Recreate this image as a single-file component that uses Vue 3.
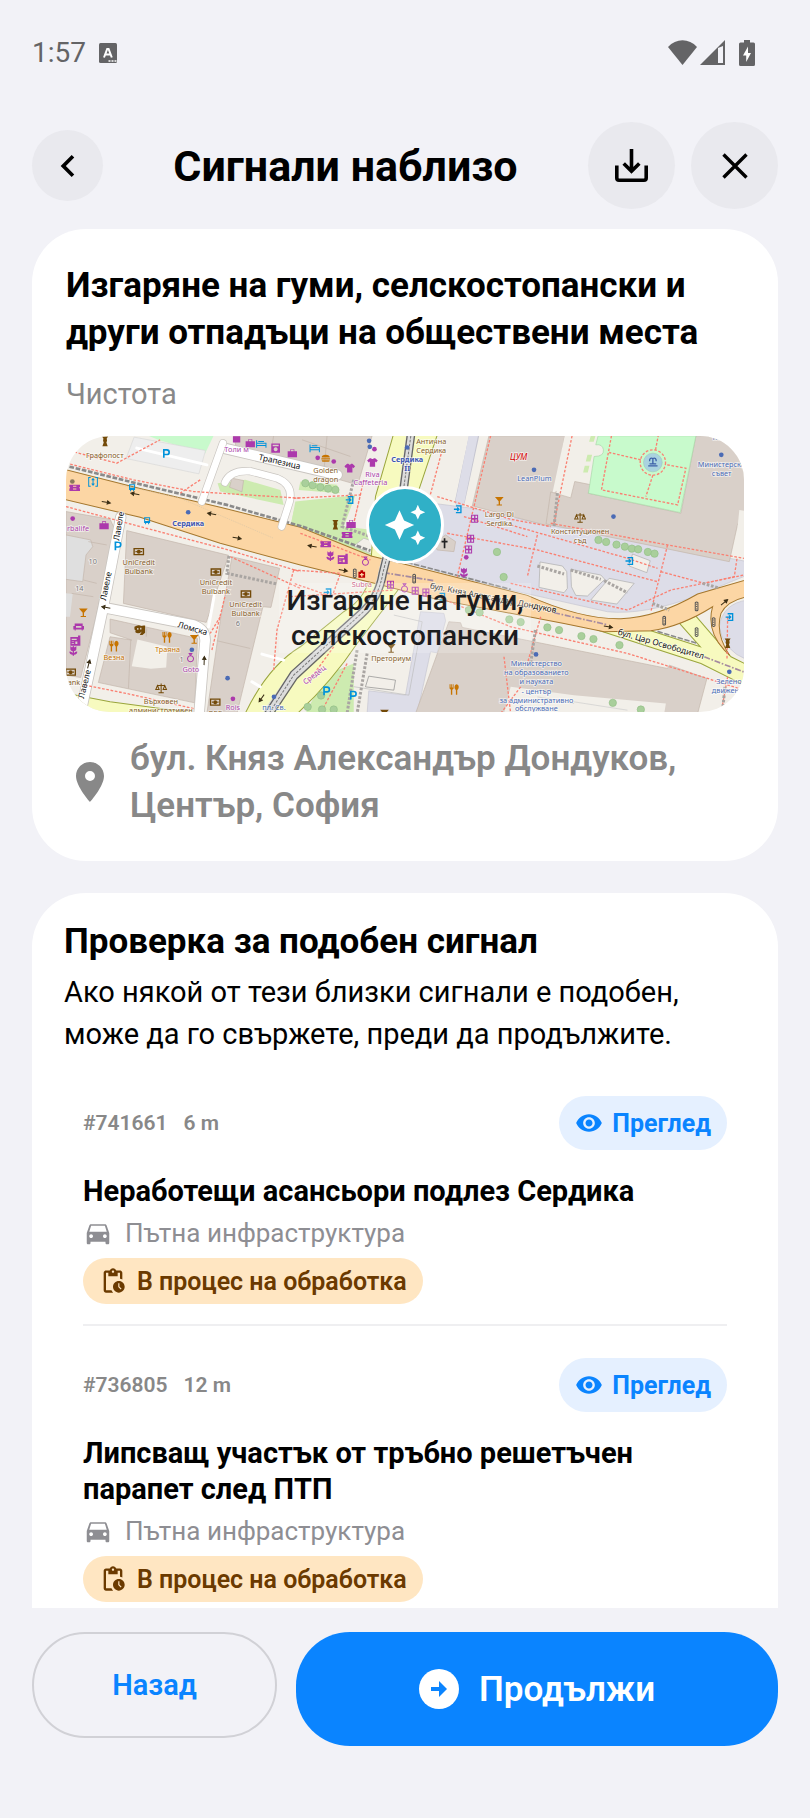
<template>
  <div class="screen">
    <div class="status-bar">
      <span class="clock">1:57</span>
      <svg class="status-lang" viewBox="0 0 18 20" aria-hidden="true">
        <rect width="18" height="20" rx="1.5" fill="#646466" />
        <path d="M5 14.5 8.2 6h1.4l3.2 8.5M6.4 11.6h5" fill="none" stroke="#fff" stroke-width="2" />
        <path d="M9.5 18h2M12.5 18h2M15.5 18h2" stroke="#fff" stroke-width="1.6" />
      </svg>
      <div class="status-icons">
        <svg width="29" height="25" viewBox="0 0 29 25" aria-hidden="true">
          <path d="M0 7C8-2 21-2 29 7L14.5 25z" fill="#646466" />
        </svg>
        <svg width="25" height="25" viewBox="0 0 25 25" aria-hidden="true">
          <path d="M25 0v25H0zM18 8v15h5V6z" fill="#646466" fill-rule="evenodd" />
        </svg>
        <svg class="battery" width="16" height="26" viewBox="0 0 16 26" aria-hidden="true">
          <path d="M5 0h6v2.5h3.5A1.5 1.5 0 0 1 16 4v20.5a1.5 1.5 0 0 1-1.5 1.5h-13A1.5 1.5 0 0 1 0 24.5V4a1.5 1.5 0 0 1 1.5-1.5H5z" fill="#646466" />
          <path d="M9 6.5 4 15.5h3.2v6.5L12 13H9z" fill="#fff" />
        </svg>
      </div>
    </div>

    <header class="header">
      <button class="round-btn small" type="button" aria-label="Назад">
        <svg width="44" height="44" viewBox="0 0 24 24"><path d="M15.41 7.41 14 6l-6 6 6 6 1.41-1.41L10.83 12z" /></svg>
      </button>
      <h1>Сигнали наблизо</h1>
      <button class="round-btn" type="button" aria-label="Изтегляне">
        <svg width="33" height="33" viewBox="0 0 33 33" fill="none" stroke="#000" stroke-width="3.6">
          <path d="M1.8 16.5V29a2.2 2.2 0 0 0 2.2 2.2h25a2.2 2.2 0 0 0 2.2-2.2V16.5M16.5 0v22M8.7 14.5l7.8 7.8 7.8-7.8" />
        </svg>
      </button>
      <button class="round-btn" type="button" aria-label="Затвори">
        <svg width="26" height="26" viewBox="0 0 26 26" fill="none" stroke="#000" stroke-width="3.4">
          <path d="M1.5 1.5l23 23M24.5 1.5l-23 23" />
        </svg>
      </button>
    </header>

    <main class="content">
      <section class="card report">
        <h2>Изгаряне на гуми, селскостопански и други отпадъци на обществени места</h2>
        <p class="report-category">Чистота</p>

        <div class="map">
          <svg class="map-canvas" viewBox="18 18 2031 828" preserveAspectRatio="xMidYMid slice" aria-hidden="true">
            <rect x="0" y="0" width="2100" height="900" fill="#f2efe9" />
            <path v-for="(a, i) in areas" :key="'a' + i" :d="a.d" :fill="a.fill" :stroke="a.stroke || 'none'" stroke-width="2" />

            <!-- yellow streets -->
            <g fill="#f7fabf" stroke="#9aa53c" stroke-width="3">
              <path d="M1000 10 945 200 930 420 Q925 500 850 545 L720 650 Q620 710 550 860 L700 860 Q810 760 890 640 Q990 510 1020 470 L1040 380 1075 180 1132 10z" />
              <path d="M10 788 150 815 430 852 430 880 10 880z" />
              <path d="M1610 600 1770 602 1918 650 1856 580 1905 558 2010 680 2060 705 2060 770 1920 700z" />
            </g>
            <!-- orange boulevard -->
            <path d="M10 118 240 176 480 232 720 292 932 378 1030 402 1400 496 Q1560 568 1680 566 Q1790 562 1910 492 L2060 448 2060 500 Q2000 510 1980 550 Q1962 610 2006 676 L1990 660 Q1935 600 1955 530 Q1860 590 1770 602 L1630 605 1510 580 1130 508 950 462 720 405 480 340 240 262 10 208z" fill="#fcd6a4" stroke="#a5772d" stroke-width="3" />
            <path d="M180 165 360 205 640 325" fill="none" stroke="#d9c6a6" stroke-width="2" stroke-dasharray="4 3" />
            <path d="M10 106 260 168 500 225 720 288 930 362" fill="none" stroke="#8a8a8a" stroke-width="8" stroke-dasharray="14 5" />
            <path d="M1020 392 1350 478M1790 604 1910 640" fill="none" stroke="#8a8a8a" stroke-width="5" stroke-dasharray="16 5" />
            <path d="M970 428 1120 452M1480 548l160 36M1930 680l120 46" fill="none" stroke="#a58aa0" stroke-width="5" stroke-dasharray="18 5 5 5" />

            <!-- tram tracks -->
            <g fill="none">
              <path d="M1050 18 1028 180 966 430 Q955 500 900 550 L700 735 620 850" stroke="#dcdcdc" stroke-width="26" />
              <path d="M1040 18 1018 180 956 430 Q945 500 892 545 L692 725 612 850M1062 18 1040 180 978 430 Q965 510 910 560 L710 745 640 850" stroke="#666" stroke-width="4" />
              <path d="M1051 18 1029 180 967 430 Q955 505 900 553 L700 735 626 850" stroke="#777" stroke-width="3" stroke-dasharray="8 4" />
            </g>

            <!-- local streets -->
            <g fill="none" stroke-linejoin="round" stroke-linecap="round">
              <g stroke="#c9c5c0" stroke-width="34">
                <path d="M182 262 130 530 66 830M130 532 400 585 Q440 600 434 640 L415 870" />
                <path d="M490 55 830 135" />
              </g>
              <g stroke="#fff" stroke-width="29">
                <path d="M182 262 130 530 66 830M130 532 400 585 Q440 600 434 640 L415 870" />
                <path d="M490 55 830 135" />
              </g>
              <path d="M488 40 425 215M494 158 Q510 120 570 124 L650 145 Q700 165 688 215 L664 290" stroke="#c9c5c0" stroke-width="24" />
              <path d="M488 40 425 215M494 158 Q510 120 570 124 L650 145 Q700 165 688 215 L664 290" stroke="#fff" stroke-width="20" />
              <path d="M230 55 440 105M465 480 445 590M605 672 670 690M575 755 600 770" stroke="#fff" stroke-width="9" />
              <path d="M1240 20 1198 215" stroke="#c5c5d0" stroke-width="30" />
              <path d="M1240 10 1198 215" stroke="#dddde8" stroke-width="27" />
            </g>

            <!-- footways -->
            <path v-for="(d, i) in footways" :key="'f' + i" :d="d" fill="none" stroke="#fa8072" stroke-width="4" stroke-dasharray="8 5" />
            <path d="M506 378 500 430 650 462M1490 190 1480 290M880 150 845 290 960 330M1430 408l80 24M1530 420l90 28M1630 452l70 36M1775 520l50 20M1925 460l50 14M890 660 860 850M920 670 890 850M1424 600 1410 700M1992 770l-8 80" fill="none" stroke="#a9a5a2" stroke-width="9" stroke-dasharray="8 5" />

            <circle v-for="(t, i) in trees" :key="'t' + i" :cx="t[0]" :cy="t[1]" r="11" fill="#a9cf9b" stroke="#93bf86" stroke-width="2" />
            <circle cx="1776" cy="98" r="28" fill="#aad3df" stroke="#9fc9c0" stroke-width="2" />
            <circle cx="1776" cy="98" r="38" fill="none" stroke="#fa8072" stroke-width="4" stroke-dasharray="8 5" />
            <path d="M1762 108h28M1766 102h20M1776 100V86M1766 94q0-12 10-8 10-4 10 8" fill="none" stroke="#3b5fa8" stroke-width="4" />

            <!-- points of interest -->
            <circle v-for="(p, i) in dots" :key="'d' + i" :cx="p[0]" :cy="p[1]" r="7" :fill="p[2]" />
            <g v-for="(p, i) in pois" :key="'p' + i" :transform="`translate(${p.x} ${p.y})`">
              <path :d="glyphs[p.icon].d" :fill="glyphs[p.icon].line ? 'none' : p.color" :stroke="p.color" :stroke-width="glyphs[p.icon].line || 0" fill-rule="evenodd" />
            </g>
            <g v-for="(a, i) in arrows" :key="'r' + i" :transform="`translate(${a[0]} ${a[1]}) rotate(${a[2]})`">
              <path d="M-13 0H6M4-5 13 0 4 5z" fill="#3a2d14" stroke="#3a2d14" stroke-width="3" />
            </g>

            <text
              v-for="(l, i) in labels"
              :key="'l' + i"
              class="map-label"
              :class="l.kind"
              :transform="`translate(${l.x} ${l.y}) rotate(${l.r || 0})`"
              text-anchor="middle"
            >{{ l.text }}</text>
          </svg>

          <div class="marker">
            <span class="marker-dot">
              <svg width="44" height="44" viewBox="0 0 24 24" fill="#fff">
                <path d="M19 9l1.25-2.75L23 5l-2.75-1.25L19 1l-1.25 2.75L15 5l2.75 1.25L19 9zm-7.5.5L9 4 6.5 9.5 1 12l5.5 2.5L9 20l2.5-5.5L17 12l-5.5-2.5zM19 15l-1.25 2.75L15 19l2.75 1.25L19 23l1.25-2.75L23 19l-2.75-1.25L19 15z" />
              </svg>
            </span>
            <span class="marker-label">Изгаряне на гуми, селскостопански</span>
          </div>
        </div>

        <div class="address">
          <svg width="48" height="48" viewBox="0 0 24 24" fill="#888" aria-hidden="true">
            <path d="M12 2C8.13 2 5 5.13 5 9c0 5.25 7 13 7 13s7-7.75 7-13c0-3.87-3.13-7-7-7zm0 9.5a2.5 2.5 0 0 1 0-5 2.5 2.5 0 0 1 0 5z" />
          </svg>
          <p>бул. Княз Александър Дондуков, Център, София</p>
        </div>
      </section>

      <section class="card similar">
        <h2>Проверка за подобен сигнал</h2>
        <p class="hint">Ако някой от тези близки сигнали е подобен, може да го свържете, преди да продължите.</p>

        <ul class="list">
          <li v-for="s in signals" :key="s.id" class="item">
            <div class="item-top">
              <span class="meta"><span>#{{ s.id }}</span><span>{{ s.distance }}</span></span>
              <button class="view-btn" type="button">
                <svg width="28" height="28" viewBox="0 0 24 24" fill="#0a84ff" aria-hidden="true">
                  <path d="M12 4.5C7 4.5 2.73 7.61 1 12c1.73 4.39 6 7.5 11 7.5s9.27-3.11 11-7.5c-1.73-4.39-6-7.5-11-7.5zM12 17c-2.76 0-5-2.24-5-5s2.24-5 5-5 5 2.24 5 5-2.24 5-5 5zm0-8c-1.66 0-3 1.34-3 3s1.34 3 3 3 3-1.34 3-3-1.34-3-3-3z" />
                </svg>
                Преглед
              </button>
            </div>
            <h3>{{ s.title }}</h3>
            <p class="category">
              <svg width="30" height="30" viewBox="0 0 24 24" fill="#8e8e93" aria-hidden="true">
                <path d="M18.92 6.01C18.72 5.42 18.16 5 17.5 5h-11c-.66 0-1.21.42-1.42 1.01L3 12v8c0 .55.45 1 1 1h1c.55 0 1-.45 1-1v-1h12v1c0 .55.45 1 1 1h1c.55 0 1-.45 1-1v-8l-2.08-5.99zM6.5 16c-.83 0-1.5-.67-1.5-1.5S5.67 13 6.5 13s1.5.67 1.5 1.5S7.33 16 6.5 16zm11 0c-.83 0-1.5-.67-1.5-1.5s.67-1.5 1.5-1.5 1.5.67 1.5 1.5-.67 1.5-1.5 1.5zM5 11l1.5-4.9h11L19 11H5z" />
              </svg>
              {{ s.category }}
            </p>
            <span class="chip">
              <svg width="28" height="28" viewBox="0 0 24 24" fill="#6b3a00" aria-hidden="true">
                <path d="M17 12c-2.76 0-5 2.24-5 5s2.24 5 5 5 5-2.24 5-5-2.24-5-5-5zm1.65 7.35L16.5 17.2V14h1v2.79l1.85 1.85-.7.71zM18 3h-3.18C14.4 1.84 13.3 1 12 1s-2.4.84-2.82 2H6c-1.1 0-2 .9-2 2v15c0 1.1.9 2 2 2h6.11a6.74 6.74 0 0 1-1.42-2H6V5h2v3h8V5h2v5.08c.71.1 1.38.31 2 .6V5c0-1.1-.9-2-2-2zm-6 2c-.55 0-1-.45-1-1s.45-1 1-1 1 .45 1 1-.45 1-1 1z" />
              </svg>
              {{ s.status }}
            </span>
          </li>
        </ul>
      </section>
    </main>

    <footer class="footer">
      <button class="back-btn" type="button">Назад</button>
      <button class="next-btn" type="button">
        <svg width="40" height="40" viewBox="0 0 40 40" aria-hidden="true">
          <circle cx="20" cy="20" r="20" fill="#fff" />
          <path d="M12 18h8v-6l8 8-8 8v-6h-8z" fill="#0a84ff" />
        </svg>
        Продължи
      </button>
    </footer>
  </div>
</template>

<script setup>
import { ref } from 'vue'

const signals = ref([
  {
    id: 741661,
    distance: '6 m',
    title: 'Неработещи асансьори подлез Сердика',
    category: 'Пътна инфраструктура',
    status: 'В процес на обработка'
  },
  {
    id: 736805,
    distance: '12 m',
    title: 'Липсващ участък от тръбно решетъчен парапет след ПТП',
    category: 'Пътна инфраструктура',
    status: 'В процес на обработка'
  }
])

// Map colours
const building = { fill: '#d9d0c9', stroke: '#c2b5aa' }
const plaza = { fill: '#dddde8', stroke: '#c5c5d0' }
const grass = { fill: '#cdebb0' }
const violet = '#ac39ac'
const blue = '#0092da'
const brown = '#734a08'
const orange = '#c77400'
const navy = '#4b6bb5'

const areas = [
  { d: 'M265 18H460L435 70 300 32z', fill: '#c8facc' },
  { d: 'M222 22 436 62 416 132 198 86z', fill: '#eeeeee', stroke: '#d8d8d8' },
  { d: 'M472 160 555 150 660 180 670 225 480 185z', ...grass },
  { d: 'M515 145 550 152 545 186 508 172z', ...building },
  { d: 'M700 245 720 235V300L690 290z', ...grass },
  { d: 'M18 245 150 268 165 300 108 560 62 742 18 735z', ...building },
  { d: 'M18 315 92 330 98 350 78 375 68 455 18 448z', fill: '#dfdfdf', stroke: '#c2b5aa' },
  { d: 'M18 490 38 492 30 560 18 560z', fill: '#dfdfdf' },
  { d: 'M85 335 140 345M70 450 110 460M35 490 100 500', fill: 'none', stroke: '#c2b5aa' },
  { d: 'M200 302 505 376 438 577 190 520z', ...building },
  { d: 'M515 380 658 415 632 532 608 530 530 850 440 850 482 560 505 440z', ...building },
  { d: 'M150 567 412 625 404 818 115 757 150 620 215 630 150 608z', ...building },
  { d: 'M232 628 322 650 318 712 272 716 215 708z', fill: '#f2efe9' },
  { d: 'M212 630 205 775M470 632 570 655M260 595 258 620', fill: 'none', stroke: '#c2b5aa' },
  { d: 'M520 18H935L892 165 770 130 530 62z', ...building },
  { d: 'M800 18 790 130M725 30 870 80M640 18 630 80', fill: 'none', stroke: '#c2b5aa' },
  { d: 'M705 215 885 196 850 290 938 300V385L690 295z', ...grass },
  { d: 'M720 155 830 165 838 190 715 180z', ...grass },
  { d: 'M880 348 910 325 940 335V375z', fill: '#f2efe9', stroke: '#bbb' },
  { d: 'M1075 215 1235 235 1460 285 2060 395V435L1905 498Q1750 556 1640 545L1350 480 1035 398z', ...plaza },
  { d: 'M1285 18H1512L1470 290 1235 228z', ...building },
  { d: 'M1512 18H1650L1590 190 1535 200 1530 160 1475 190z', fill: '#f2efe9' },
  { d: 'M1470 186 1530 204 1542 155 1592 165 1582 190 1860 250 1905 18H2060V278L2030 282 2005 395 1456 282z', ...building },
  { d: 'M2035 240 2060 245V300L2030 290z', fill: '#f2efe9' },
  { d: 'M1650 18H1905L1858 248 1583 190 1600 80Q1630 80 1628 60 1625 42 1605 45L1612 18z', fill: '#c8facc', stroke: '#a8d8a8' },
  { d: 'M1590 18h14l-5 18h-14zM1580 75h14l-5 20h-14zM1572 108h14l-5 20h-14z', ...grass },
  { d: 'M1120 340 1155 315 1185 335 1180 365 1130 360z', ...building },
  { d: 'M1438 396 1505 408 1518 425 1520 475 1510 488 1435 472z', fill: '#f2efe9', stroke: '#aaa' },
  { d: 'M1530 418 1620 435 1632 448 1580 498 1545 496 1532 470z', fill: '#f2efe9', stroke: '#aaa' },
  { d: 'M1645 445 1720 460 1668 522 1590 510z', fill: '#f2efe9', stroke: '#aaa' },
  { d: 'M1715 372 1768 392 1758 428 1705 408z', fill: '#f2efe9', stroke: '#aaa' },
  { d: 'M2060 510Q1985 520 1975 590 1985 660 2060 690z', ...plaza },
  { d: 'M1080 545 1150 550 1155 572 1130 668 1110 665 1070 850H920L925 782 1035 795z', ...plaza },
  { d: 'M1000 555 1085 575 1045 795 850 765', fill: 'none', stroke: '#bbb' },
  { d: 'M925 738 1005 750 1000 780 915 770z', fill: 'none', stroke: '#888' },
  { d: 'M1165 575 1200 578 1205 592 1820 715 1825 705 1938 745 1910 850H1065z', ...building },
  { d: 'M1350 770 1540 795 1815 820 1810 850H1330z', fill: '#f2efe9' },
  { d: 'M1540 815 1700 840M1430 800 1540 820', fill: 'none', stroke: '#ccc' },
  { d: 'M735 850 790 745 830 720 880 700 880 850z', ...grass }
]

const footways = [
  'M18 60 170 100 300 30M18 100 220 150 400 185 720 205',
  'M18 230 240 290 505 360 720 425M420 150 360 190',
  'M510 380 720 475M700 420 650 600 640 720M480 560 450 610',
  'M75 765 200 790 400 835M500 475 455 660',
  'M700 205 900 195 880 280M910 150 880 280M720 310 930 390',
  'M700 420 840 430 815 500 700 460M690 500 1000 480',
  'M1130 200 1260 240 1350 268 1470 290M1145 60 1100 230',
  'M1290 18 1240 230 1190 440M1210 260 1400 320M1160 310 1430 360 1790 455',
  'M1350 285 1700 385 1790 415M1430 315 1400 440M1350 460 1700 540 1830 480 2049 435',
  'M1534 18 1480 280M1470 280 1820 345 2049 385M1820 345 1770 545',
  'M1652 18 1622 180 1850 225 1875 115 1814 104M1740 90 1645 68M1776 136 1755 200M1784 60 1792 18',
  'M1800 425 1930 460 2020 440 2028 385M2000 560 1998 690',
  'M1130 500 1350 590 1700 670 1940 745 2049 780M1440 560 1400 700',
  'M1330 680 1350 850M1380 770 1320 850M2000 740 1980 850M820 650 740 760M860 700 780 850'
]

const trees = [
  [735, 160], [757, 166], [780, 172], [803, 176], [825, 180],
  [1613, 330], [1636, 336], [1667, 344], [1692, 350], [1713, 356], [1732, 358], [1761, 366], [1781, 371],
  [1309, 366], [1329, 441], [1225, 540], [1257, 547], [1346, 568], [1380, 576],
  [1460, 592], [1495, 600], [1562, 618], [1598, 627], [1676, 645],
  [1656, 818], [1740, 838], [742, 830], [782, 796], [785, 838], [820, 838]
]

const dots = [
  [38, 266, violet], [395, 659, navy], [502, 744, navy], [518, 806, violet], [641, 800, navy],
  [926, 33, navy], [928, 51, navy], [942, 58, violet], [772, 84, violet], [820, 95, violet],
  [1040, 53, navy], [1420, 120, navy], [1658, 260, navy], [1981, 75, navy], [1426, 673, navy],
  [2005, 725, navy], [384, 247, navy], [37, 155, '#8a7a5c'], [1217, 382, violet]
]

// Small pictograms drawn around their own centre
const glyphs = {
  bank: { d: 'M-16-11H16V11H-16zM-12-7V7H12V-7zM0-6A6 6 0 1 1 0 6 6 6 0 0 1 0-6zM-10-2h4v4h-4zM6-2h4v4H6z' },
  bar: { d: 'M-13-13H13L2 0V10H8V13H-8V10H-2V0z' },
  food: { d: 'M-13-16h3v10h2v-10h3v10h2v-10h2V-2L-5 1V16H-9V1L-13-3zM8-16q8 2 6 12l-4 6v14H6V2L2-4Q1-14 8-16z' },
  parking: { line: 5, d: 'M-7 13V-11H2A7 7 0 0 1 2 3H-7' },
  bus: { d: 'M-9-9H9V8H6v4H3V8H-3v4H-6V8H-9zM-6-6V2H6V-6z' },
  lift: { line: 3, d: 'M-7-13h-6v26h6M7-13h6v26H7M0-9V9M-4-5 0-10 4-5M-4 5 0 10 4 5' },
  scales: { line: 3, d: 'M0-15V12M-8 13H8M-12-9H12M-11-9l-5 12h10zM11-9 6 3H16z' },
  shirt: { d: 'M-8-13h4q4 5 8 0h4l8 7-5 6-3-3V13H-8V-3l-3 3-5-6z' },
  shop: { d: 'M-11-9H11V10H-11z' },
  bag: { d: 'M-14-6h8v-6H6v6h8V12H-14zM-4-6H4v-4H-4z' },
  box: { d: 'M-13-14H13V14H-13zM-9-10v4H9v-4zM0-3a6 6 0 1 0 .1 0z' },
  bed: { line: 3, d: 'M-14-11V12M-14 5H14V12M-14-2H14V4M-9-7H8' },
  burger: { d: 'M-12-3Q-12-11 0-11T12-3zM-13-1H13V3H-13zM-12 5H12Q12 10 8 10H-8Q-12 10-12 5z' },
  ticket: { d: 'M-16-9H16v6q-5 3 0 6v6H-16V3q5-3 0-6zM-5-6v3h10v-3zM-5 2v3H5V2z' },
  flower: { d: 'M-9-14l5 4 4-5 4 5 5-4v10Q7 1 2 1V7q5-6 10-4-1 9-10 9v3H-2v-3q-9 0-10-9 5-2 10 4V1Q-7 1-9-4z' },
  ring: { line: 3, d: 'M0-7a9 9 0 1 0 .1 0M-4-14H4L0-8z' },
  gifts: { line: 3, d: 'M-9-10H0V0H-9zM1-10H9V0H1zM-9 1H0V11H-9zM1 1H9V11H1z' },
  sofa: { d: 'M-12-10H12V-2h4V8H12v3H9V8H-9v3h-3V8h-4V-2h4zM-8-2V3H8V-2z' },
  news: { d: 'M-15-11H8V-16H15V15H-15zM-11-6V-2H4V-6zM-11 2V4H-4V2zM-11 7V9H-4V7zM0 2V10H6V2z' },
  signal: { line: 3, d: 'M-4-11Q0-15 4-11V11Q0 15-4 11zM0-8v3M0-1v3M0 6v3' },
  medic: { d: 'M-10-7H-4V-11H4V-7H10V11H-10zM-2-3V0H-6V4H-2V8H2V4H6V0H2V-3z' },
  cross: { line: 5, d: 'M0-15V15M-9-5H9' },
  exit: { line: 4, d: 'M-6-10H9V10H-6M-12 0H3M-2-5 3 0-2 5' },
  tower: { d: 'M-9-15H9L5-9 6-2 4 3 8 14H-8L-4 3-6-2-5-9z' },
  theatre: { d: 'M-16-10Q-4-18 4-12L12-14H16V8L8 15H0L6 4Q-4 14-14 6-10 0-16-2zM-8-6v5h4v-5zM1-7v5h4v-5z' }
}

const pois = [
  { icon: 'tower', x: 135, y: 35, color: brown }, { icon: 'parking', x: 318, y: 71, color: blue },
  { icon: 'lift', x: 99, y: 156, color: blue }, { icon: 'bus', x: 216, y: 172, color: blue },
  { icon: 'bus', x: 261, y: 271, color: blue }, { icon: 'ticket', x: 44, y: 174, color: violet },
  { icon: 'bag', x: 132, y: 286, color: violet }, { icon: 'parking', x: 173, y: 348, color: blue },
  { icon: 'bank', x: 236, y: 365, color: brown }, { icon: 'bank', x: 467, y: 426, color: brown },
  { icon: 'bank', x: 557, y: 492, color: brown }, { icon: 'bank', x: 465, y: 816, color: brown },
  { icon: 'bank', x: 32, y: 726, color: brown }, { icon: 'bar', x: 70, y: 548, color: orange },
  { icon: 'sofa', x: 56, y: 590, color: violet }, { icon: 'news', x: 46, y: 632, color: violet },
  { icon: 'flower', x: 40, y: 662, color: violet }, { icon: 'theatre', x: 239, y: 600, color: brown },
  { icon: 'food', x: 320, y: 622, color: orange }, { icon: 'bar', x: 402, y: 628, color: orange },
  { icon: 'food', x: 161, y: 648, color: orange }, { icon: 'ring', x: 391, y: 684, color: violet },
  { icon: 'scales', x: 303, y: 775, color: brown }, { icon: 'shop', x: 529, y: 28, color: violet },
  { icon: 'bag', x: 570, y: 40, color: violet }, { icon: 'bed', x: 603, y: 42, color: blue },
  { icon: 'box', x: 646, y: 55, color: violet }, { icon: 'bag', x: 696, y: 70, color: violet },
  { icon: 'bed', x: 763, y: 55, color: blue }, { icon: 'burger', x: 796, y: 86, color: orange },
  { icon: 'shirt', x: 868, y: 115, color: violet }, { icon: 'shirt', x: 936, y: 98, color: violet },
  { icon: 'exit', x: 868, y: 210, color: blue }, { icon: 'tower', x: 825, y: 285, color: brown },
  { icon: 'bag', x: 872, y: 282, color: violet }, { icon: 'ticket', x: 860, y: 315, color: violet },
  { icon: 'ticket', x: 796, y: 343, color: violet }, { icon: 'flower', x: 810, y: 378, color: violet },
  { icon: 'news', x: 847, y: 387, color: violet }, { icon: 'ring', x: 915, y: 395, color: violet },
  { icon: 'signal', x: 883, y: 430, color: '#555' }, { icon: 'medic', x: 904, y: 432, color: '#bf0000' },
  { icon: 'gifts', x: 990, y: 464, color: violet }, { icon: 'ring', x: 1032, y: 475, color: violet },
  { icon: 'gifts', x: 1064, y: 482, color: violet }, { icon: 'gifts', x: 1096, y: 487, color: violet },
  { icon: 'signal', x: 1061, y: 446, color: '#555' }, { icon: 'cross', x: 1152, y: 340, color: '#222' },
  { icon: 'exit', x: 1192, y: 238, color: blue }, { icon: 'gifts', x: 1242, y: 266, color: violet },
  { icon: 'gifts', x: 1230, y: 326, color: violet }, { icon: 'gifts', x: 1224, y: 358, color: violet },
  { icon: 'flower', x: 1210, y: 428, color: violet }, { icon: 'bar', x: 1316, y: 214, color: orange },
  { icon: 'scales', x: 1558, y: 264, color: brown }, { icon: 'exit', x: 1706, y: 393, color: blue },
  { icon: 'signal', x: 1810, y: 572, color: '#555' }, { icon: 'signal', x: 1907, y: 529, color: '#555' },
  { icon: 'signal', x: 1907, y: 606, color: '#555' }, { icon: 'signal', x: 1958, y: 576, color: '#555' },
  { icon: 'exit', x: 2006, y: 561, color: blue }, { icon: 'tower', x: 2000, y: 640, color: brown },
  { icon: 'exit', x: 802, y: 487, color: blue }, { icon: 'exit', x: 1143, y: 500, color: blue },
  { icon: 'bar', x: 992, y: 655, color: brown }, { icon: 'food', x: 1180, y: 778, color: orange },
  { icon: 'parking', x: 798, y: 782, color: blue }, { icon: 'parking', x: 878, y: 795, color: blue },
  { icon: 'bar', x: 972, y: 852, color: brown }
]

const arrows = [
  [225, 192, 190], [138, 217, 10], [455, 252, 190], [530, 324, 10], [138, 532, 190],
  [432, 692, -88], [86, 702, -75], [756, 349, 190], [848, 421, 10], [604, 804, 125],
  [1642, 590, 10], [1990, 517, -40]
]

const labels = [
  { text: 'Графопост', x: 134, y: 84, kind: 'brown' },
  { text: 'Толи м', x: 529, y: 68, kind: 'violet' },
  { text: 'Трапезица', x: 656, y: 104, r: 13, kind: 'street' },
  { text: 'Сердика', x: 384, y: 289, kind: 'station' },
  { text: 'rbalife', x: 54, y: 302, kind: 'violet' },
  { text: 'Лавеле', x: 184, y: 290, r: -80, kind: 'street' },
  { text: 'Лавеле', x: 146, y: 470, r: -78, kind: 'street' },
  { text: 'Лавеле', x: 82, y: 764, r: -76, kind: 'street' },
  { text: 'UniCredit', x: 236, y: 404, kind: 'brown' },
  { text: 'Bulbank', x: 236, y: 431, kind: 'brown' },
  { text: 'UniCredit', x: 467, y: 465, kind: 'brown' },
  { text: 'Bulbank', x: 467, y: 492, kind: 'brown' },
  { text: 'UniCredit', x: 556, y: 532, kind: 'brown' },
  { text: 'Bulbank', x: 556, y: 559, kind: 'brown' },
  { text: '10', x: 98, y: 402, kind: 'house' },
  { text: '14', x: 58, y: 484, kind: 'house' },
  { text: '6', x: 533, y: 587, kind: 'house' },
  { text: '1', x: 364, y: 696, kind: 'house' },
  { text: 'Ломска', x: 395, y: 603, r: 16, kind: 'street' },
  { text: 'Траяна', x: 322, y: 665, kind: 'orange' },
  { text: 'Везна', x: 162, y: 690, kind: 'orange' },
  { text: 'Goto', x: 392, y: 726, kind: 'violet' },
  { text: 'ank', x: 42, y: 766, kind: 'brown' },
  { text: 'Върховен', x: 302, y: 822, kind: 'brown' },
  { text: 'административен', x: 302, y: 848, kind: 'brown' },
  { text: 'ОББ', x: 465, y: 856, kind: 'brown' },
  { text: 'Rois', x: 518, y: 839, kind: 'violet' },
  { text: 'пл. Св.', x: 641, y: 839, kind: 'navy' },
  { text: 'Golden', x: 796, y: 129, kind: 'brown' },
  { text: 'dragon', x: 796, y: 156, kind: 'brown' },
  { text: 'Riva', x: 936, y: 140, kind: 'violet' },
  { text: 'Caffeteria', x: 930, y: 166, kind: 'violet' },
  { text: 'Антична', x: 1112, y: 44, kind: 'brown' },
  { text: 'Сердика', x: 1112, y: 71, kind: 'brown' },
  { text: 'Сердика', x: 1040, y: 96, kind: 'station' },
  { text: 'II', x: 1040, y: 124, kind: 'station' },
  { text: 'Subra', x: 904, y: 472, kind: 'red' },
  { text: 'бул. Княз Александър Дондуков', x: 1296, y: 512, r: 11, kind: 'street' },
  { text: 'ЦУМ', x: 1374, y: 92, kind: 'mall' },
  { text: 'LeanPlum', x: 1421, y: 154, kind: 'navy' },
  { text: 'Largo Di', x: 1316, y: 261, kind: 'brown' },
  { text: 'Serdika', x: 1316, y: 288, kind: 'brown' },
  { text: 'Конституционен', x: 1558, y: 311, kind: 'brown' },
  { text: 'съд', x: 1558, y: 338, kind: 'brown' },
  { text: 'Министерски', x: 1982, y: 110, kind: 'navy' },
  { text: 'съвет', x: 1982, y: 137, kind: 'navy' },
  { text: 'поли', x: 1982, y: 32, kind: 'navy' },
  { text: 'бул. Цар Освободител', x: 1798, y: 650, r: 16, kind: 'street' },
  { text: 'Преториум', x: 992, y: 694, kind: 'brown' },
  { text: 'Средец', x: 766, y: 740, r: -38, kind: 'violet' },
  { text: 'Министерство', x: 1427, y: 709, kind: 'navy' },
  { text: 'на образованието', x: 1427, y: 736, kind: 'navy' },
  { text: 'и науката', x: 1427, y: 763, kind: 'navy' },
  { text: '- център', x: 1427, y: 790, kind: 'navy' },
  { text: 'за административно', x: 1427, y: 817, kind: 'navy' },
  { text: 'обслужване', x: 1427, y: 842, kind: 'navy' },
  { text: 'Зелено', x: 2004, y: 762, kind: 'navy' },
  { text: 'движени', x: 2000, y: 789, kind: 'navy' }
]
</script>

<style>
body {
  margin: 0;
  background: #f2f2f7;
}
</style>

<style scoped>
.screen {
  display: flex;
  flex-direction: column;
  height: 100vh;
  background: #f2f2f7;
  color: #000;
  font-family: Roboto, "Noto Sans", sans-serif;
}

h1,
h2,
h3,
p,
ul {
  margin: 0;
  padding: 0;
}

svg {
  display: block;
  flex: none;
}

button {
  padding: 0;
  font-family: inherit;
  border: none;
  cursor: pointer;
}

/* Status bar */
.status-bar {
  display: flex;
  align-items: center;
  height: 106px;
  padding: 0 55px 0 32px;
  color: #646466;
}

.clock {
  font-size: 28px;
  line-height: 32px;
}

.status-lang {
  width: 18px;
  height: 20px;
  margin-left: 13px;
}

.status-icons {
  display: flex;
  gap: 3px;
  margin-left: auto;
}

.battery {
  margin-left: 11px;
}

/* Header */
.header {
  display: flex;
  align-items: center;
  gap: 16px;
  padding: 16px 32px 20px;
}

.header h1 {
  flex: 1;
  font-size: 43px;
  line-height: 52px;
  font-weight: 700;
  text-align: center;
}

.round-btn {
  display: flex;
  flex: none;
  align-items: center;
  justify-content: center;
  width: 87px;
  height: 87px;
  border-radius: 50%;
  background: #e9e9ee;
}

.round-btn.small {
  width: 71px;
  height: 71px;
}

/* Cards */
.content {
  flex: 1;
  min-height: 0;
  padding: 0 32px;
  overflow-y: auto;
  scrollbar-width: none;
}

.card {
  border-radius: 54px;
  background: #fff;
}

.card h2 {
  font-size: 35px;
  line-height: 47px;
  font-weight: 700;
}

.report {
  padding: 33px 34px 32px;
}

.report-category {
  margin-top: 18px;
  color: #888;
  font-size: 29px;
  line-height: 40px;
}

.address {
  display: flex;
  align-items: center;
  gap: 16px;
  margin-top: 23px;
  color: #888;
}

.address p {
  font-size: 35px;
  line-height: 47px;
  font-weight: 600;
}

/* Map */
.map {
  position: relative;
  height: 276px;
  margin-top: 22px;
  border-radius: 44px;
  overflow: hidden;
}

.map-canvas {
  width: 100%;
  height: 100%;
}

.map-label {
  font-family: "Noto Sans", sans-serif;
  font-size: 22px;
  stroke: rgba(255, 255, 255, 0.6);
  stroke-width: 5px;
  paint-order: stroke;
}

.map-label.brown {
  fill: #86602a;
}

.map-label.orange {
  fill: #c77400;
}

.map-label.violet {
  fill: #ac46ac;
}

.map-label.navy {
  fill: #4b6bb5;
}

.map-label.red {
  fill: #c9507a;
}

.map-label.house {
  fill: #777;
}

.map-label.street {
  fill: #111;
  font-size: 25px;
}

.map-label.station {
  fill: #3b55b5;
  font-weight: 700;
}

.map-label.mall {
  fill: #d40000;
  font-size: 25px;
  font-style: italic;
}

.marker {
  position: absolute;
  top: 50px;
  left: 50%;
  display: flex;
  flex-direction: column;
  align-items: center;
  width: 252px;
  transform: translateX(-50%);
}

.marker-dot {
  display: flex;
  align-items: center;
  justify-content: center;
  width: 72px;
  height: 72px;
  border: 3px solid #fff;
  border-radius: 50%;
  background: #30b0c7;
}

.marker-label {
  margin-top: 19px;
  padding: 0 4px;
  background: rgba(255, 255, 255, 0.2);
  color: #1c1c1e;
  font-size: 28px;
  line-height: 35px;
  font-weight: 500;
  text-align: center;
}

/* Similar signals */
.similar {
  margin-top: 32px;
  padding: 25px 32px 60px;
}

.hint {
  margin-top: 6px;
  font-size: 29px;
  line-height: 42px;
}

.list {
  padding: 9px 19px 0;
  list-style: none;
}

.item {
  padding: 32px 0 20px;
  border-bottom: 2px solid #efeff1;
}

.item-top {
  display: flex;
  align-items: center;
  justify-content: space-between;
}

.meta {
  display: flex;
  gap: 16px;
  color: #888;
  font-size: 21px;
  font-weight: 600;
}

.view-btn {
  display: flex;
  align-items: center;
  gap: 9px;
  height: 54px;
  padding: 0 16px;
  border-radius: 27px;
  background: #e5f0ff;
  color: #0a84ff;
  font-size: 25px;
  font-weight: 700;
}

.item h3 {
  margin-top: 23px;
  font-size: 29px;
  line-height: 36px;
  font-weight: 700;
}

.category {
  display: flex;
  align-items: center;
  gap: 12px;
  margin-top: 6px;
  color: #8e8e93;
  font-size: 26px;
  line-height: 36px;
}

.chip {
  display: flex;
  align-items: center;
  gap: 10px;
  width: fit-content;
  height: 46px;
  margin-top: 7px;
  padding: 0 16px;
  border-radius: 23px;
  background: #ffe6c2;
  color: #6b3a00;
  font-size: 25px;
  font-weight: 600;
}

/* Bottom actions */
.footer {
  display: flex;
  align-items: flex-start;
  gap: 19px;
  height: 186px;
  padding: 24px 32px 0;
}

.back-btn {
  flex: 1;
  height: 106px;
  border: 2px solid #d1d1d6;
  border-radius: 53px;
  background: transparent;
  color: #0a84ff;
  font-size: 29px;
  font-weight: 600;
}

.next-btn {
  display: flex;
  flex: 2;
  align-items: center;
  justify-content: center;
  gap: 20px;
  height: 114px;
  border-radius: 54px;
  background: #0a84ff;
  color: #fff;
  font-size: 35px;
  font-weight: 600;
}
</style>
